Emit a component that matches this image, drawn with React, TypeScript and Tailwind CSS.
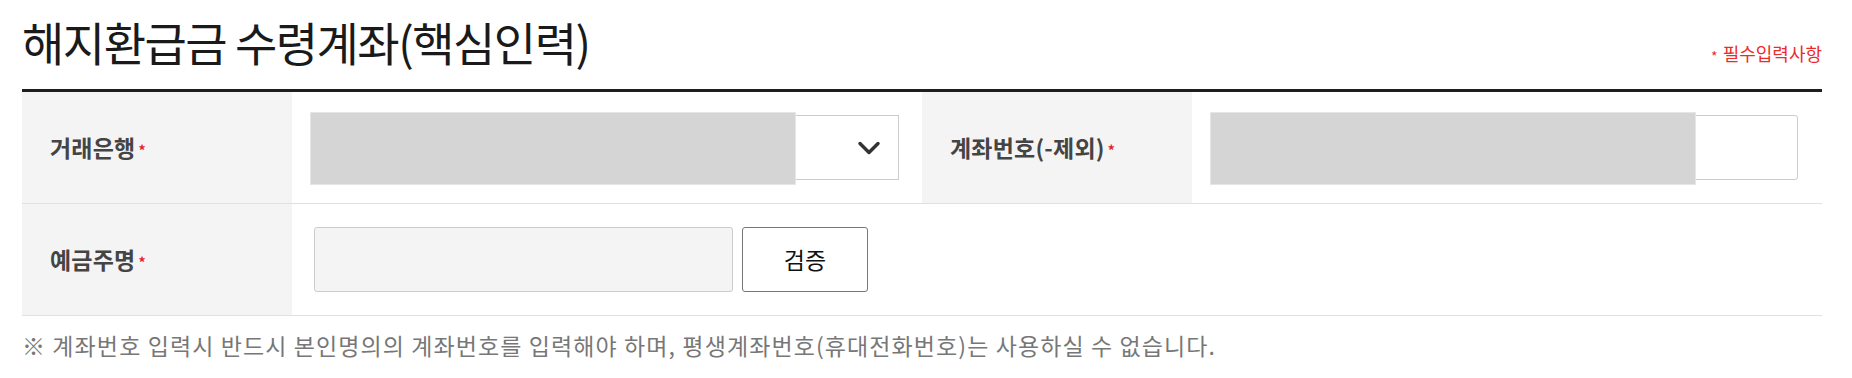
import { ChevronDown } from 'lucide-react'

const FONT = "font-['Noto_Sans_CJK_KR','Noto_Sans',sans-serif]"

function Label({ text }: { text: string }) {
  return (
    <div className="flex items-center bg-[#f4f4f4] pl-[28px]">
      <span className="text-[23px] font-bold tracking-[0.2px] text-[#444]">{text}</span>
      <span className="ml-[3px] mt-[6px] text-[14px] font-bold text-[#e8202a]">*</span>
    </div>
  )
}

// gray block covering the entered value
function Mask() {
  return (
    <div className="absolute left-[18px] top-[20px] h-[73px] w-[486px] border border-[#e6e6e6] bg-[#d5d5d5]" />
  )
}

export default function App() {
  return (
    <div className={`${FONT} h-[378px] w-[1852px] bg-white pl-[22px]`}>
      <div className="w-[1800px]">
        {/* Header */}
        <div className="flex h-[89px] items-start justify-between">
          <h1 className="mt-[11px] text-[46px] font-normal leading-[60px] tracking-[-1.5px] text-[#1a1a1a]">
            해지환급금 수령계좌(핵심인력)
          </h1>
          <p className="mt-[40px] flex items-center text-[18px] leading-[26px] text-[#ee2b2b]">
            <span className="relative top-[3px] mr-[5px] text-[14px]">*</span>필수입력사항
          </p>
        </div>

        {/* Table */}
        <div className="border-t-[3px] border-[#1e1e1e]">
          <div className="grid h-[112px] grid-cols-[270px_630px_270px_630px] border-b border-[#e0e0e0]">
            <Label text="거래은행" />
            <div className="relative flex items-center pl-[20px] pr-[23px]">
              <div className="flex h-[65px] w-full items-center justify-end border border-[#cccccc] bg-white pr-[11px]">
                <ChevronDown className="h-[36px] w-[36px] text-[#333]" strokeWidth={2.3} />
              </div>
              <Mask />
            </div>
            <Label text="계좌번호(-제외)" />
            <div className="relative flex items-center pl-[20px] pr-[24px]">
              <div className="h-[65px] w-full rounded-[3px] border border-[#cccccc] bg-white" />
              <Mask />
            </div>
          </div>

          <div className="grid h-[112px] grid-cols-[270px_1530px] border-b border-[#e0e0e0]">
            <Label text="예금주명" />
            <div className="flex items-center gap-[9px] pl-[22px]">
              <div className="h-[65px] w-[419px] rounded-[3px] border border-[#cccccc] bg-[#f4f4f4]" />
              <button
                type="button"
                className="h-[65px] w-[126px] rounded-[3px] border border-[#777] bg-white text-[23px] text-[#111]"
              >
                검증
              </button>
            </div>
          </div>
        </div>

        <p className="mt-[13px] text-[23px] leading-[32px] tracking-[1.1px] text-[#777]">
          ※ 계좌번호 입력시 반드시 본인명의의 계좌번호를 입력해야 하며, 평생계좌번호(휴대전화번호)는 사용하실 수 없습니다.
        </p>
      </div>
    </div>
  )
}
